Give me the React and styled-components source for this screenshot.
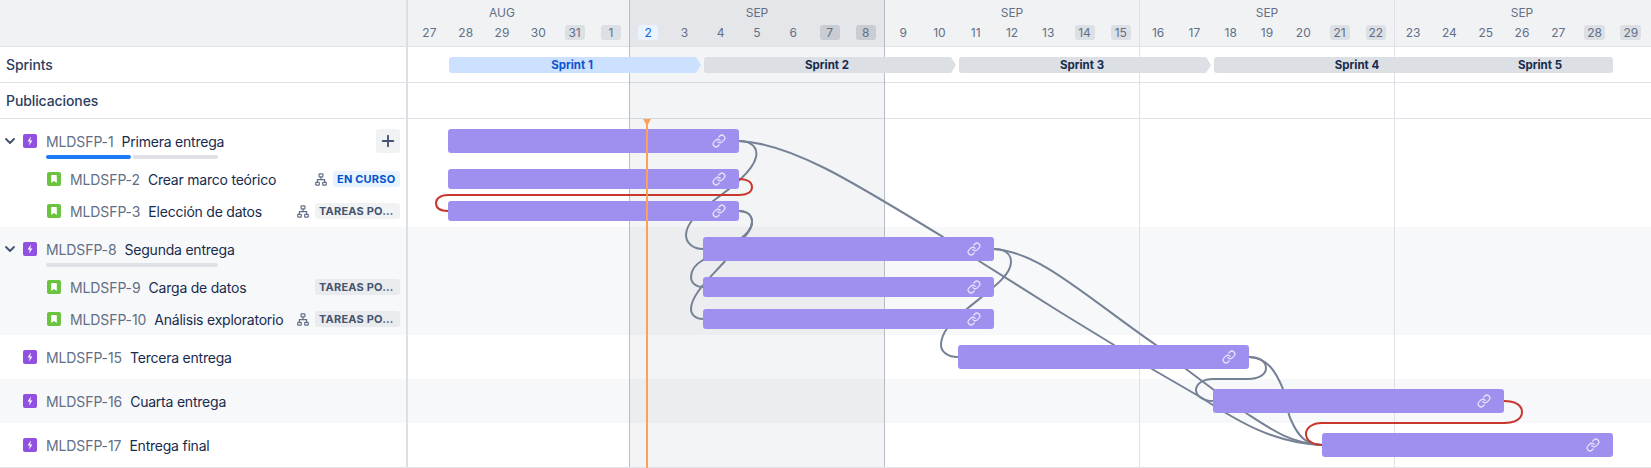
import React from "react";
import styled, { createGlobalStyle } from "styled-components";
import { Plus, ChevronDown, Link as LinkIcon } from "lucide-react";

const Global = createGlobalStyle`
  html, body { margin: 0; padding: 0; background: #fff; }
  body { font-family: Inter, "Liberation Sans", sans-serif; color: #172b4d; }
`;

const LEFT = 408;
const Page = styled.div`
  position: relative; width: 1651px; height: 468px; overflow: hidden; background: #fff;
  font-family: Inter, "Liberation Sans", sans-serif; -webkit-font-smoothing: antialiased;
`;
const Row = styled.div`
  display: grid; grid-template-columns: ${LEFT}px 1fr; height: ${p => p.$h}px;
  background: ${p => (p.$stripe ? "#f7f8f9" : "transparent")};
  border-bottom: ${p => (p.$line ? "1px solid #dfe1e6" : "none")};
`;
const HeaderRow = styled(Row)` background: #f1f2f4; `;
const Side = styled.div`
  display: flex; align-items: center; min-width: 0; box-sizing: border-box;
  border-right: 2px solid #dcdfe4; padding-left: ${p => p.$pad ?? 6}px; padding-right: 6px; position: relative;
`;
const Track = styled.div` overflow: hidden; position: relative; min-width: 0; `;
const SprintTrack = styled.div` height: 100%; `;
const PlainLabel = styled.span` font-size: 14px; font-weight: 500; color: #2c3e5d; letter-spacing: -0.1px; `;

const Weeks = styled.div` display: flex; margin-left: -34px; height: 46px; `;
const Week = styled.div`
  flex: 0 0 255px; display: flex; flex-direction: column; align-items: stretch;
  background: ${p => (p.$shaded ? "rgba(20,30,55,0.055)" : "transparent")};
`;
const Month = styled.div` height: 24px; line-height: 25px; padding-left: 1px; font-size: 12px; text-align: center; color: #626f86; `;
const Days = styled.div` display: flex; padding-left: 1px; `;
const Day = styled.div` flex: 1 1 0; display: flex; justify-content: center; `;
const DayNum = styled.span`
  display: block; height: 15px; line-height: 15px; margin-top: 1px; padding: 0 ${p => (p.$today ? 6 : p.$chip ? 3 : 0)}px; min-width: ${p => (p.$chip ? 14 : 0)}px; text-align: center;
  border-radius: 3px; font-size: 12px;
  color: ${p => (p.$today ? "#0c66e4" : "#626f86")};
  background: ${p => (p.$today ? "#e9f2ff" : p.$chip ? (p.$dark ? "#c9ccd2" : "#dcdfe4") : "transparent")};
`;

const Overlay = styled.div` position: absolute; inset: 0 0 1px 0; pointer-events: none; z-index: 1; `;
const Shade = styled.div` position: absolute; left: 629px; top: 47px; bottom: 0; width: 255px; background: rgba(20,30,55,0.05); `;
const WeekLine = styled.div` position: absolute; top: 0; bottom: 0; width: 1px; left: ${p => p.$x}px; background: ${p => (p.$dark ? "#b9bcc6" : "#dfe1e6")}; `;

const Links = styled.svg` position: absolute; left: 0; top: 0; z-index: 2; pointer-events: none; `;

const Sprint = styled.div`
  position: absolute; z-index: 3; top: ${p => p.$y}px; height: 16px; display: flex; align-items: center; justify-content: center;
  font-size: 11.5px; font-weight: 700; white-space: nowrap;
  left: ${p => p.$x}px; width: ${p => p.$w}px;
  background: ${p => (p.$active ? "#cce0ff" : "#dcdfe4")};
  color: ${p => (p.$active ? "#0c55cf" : "#172b4d")};
  border-radius: 3px 0 0 3px;
  clip-path: polygon(0 0, calc(100% - 5px) 0, 100% 50%, calc(100% - 5px) 100%, 0 100%);
  padding-right: 6px; box-sizing: border-box;
`;
const LastSprint = styled(Sprint)` clip-path: none; border-radius: 3px; padding-right: 0; `;

const Bar = styled.div`
  position: absolute; z-index: 3; box-sizing: border-box;
  left: ${p => p.$x}px; width: ${p => p.$w}px; top: ${p => p.$y}px; height: ${p => p.$h}px;
  background: #9f8fef; border-radius: 3px; display: flex; align-items: center; justify-content: flex-end; padding-right: 13px;
  color: rgba(255,255,255,0.75);
`;

const Today = styled.div` position: absolute; z-index: 4; left: 646px; top: 119px; bottom: 0; width: 2px; background: #fca05a; `;
const TodayTip = styled.div`
  position: absolute; z-index: 4; left: 643px; top: 119px; width: 0; height: 0;
  border-left: 4px solid transparent; border-right: 4px solid transparent; border-top: 7px solid #fca05a;
`;

const Expand = styled.span` position: absolute; left: 2px; top: 50%; transform: translateY(-50%); display: flex; color: #44546f; `;
const IconSlot = styled.svg` flex: 0 0 14px; width: 14px; height: 14px; display: block; `;
const Key = styled.span` margin-left: 9px; font-size: 14px; color: #626f86; white-space: nowrap; letter-spacing: -0.1px; `;
const Summary = styled.span` margin-left: 8px; font-size: 14px; color: #172b4d; white-space: nowrap; letter-spacing: -0.22px; `;
const Meta = styled.div` margin-left: auto; display: flex; align-items: center; gap: 6px; `;
const ChildSvg = styled.svg` display: block; width: 12px; height: 13px; color: #626f86; `;
const Lozenge = styled.span`
  display: block; box-sizing: border-box; height: 16px; line-height: 16px; padding: 0 4px; border-radius: 3px;
  font-size: 11px; font-weight: 700; letter-spacing: 0.2px; white-space: nowrap;
  width: ${p => (p.$active ? "67px" : "85px")};
  background: ${p => (p.$active ? "#e9f2ff" : p.$stripe ? "#e9ebee" : "#f1f2f4")};
  color: ${p => (p.$active ? "#0055cc" : "#44546f")};
`;
const AddBtn = styled.button`
  margin-left: auto; width: 24px; height: 24px; padding: 0; border: 0; border-radius: 3px; background: #f1f2f4; color: #44546f;
  display: flex; align-items: center; justify-content: center;
`;
const Progress = styled.div` position: absolute; left: 46px; bottom: 4px; width: 172px; height: 4px; display: flex; gap: 2px; `;
const ProgressPart = styled.div` flex: 1 1 0; border-radius: 2px; background: ${p => (p.$on ? "#1d7afc" : "#dfe1e6")}; `;

const EpicIcon = () => (
  <IconSlot viewBox="0 0 14 14">
    <rect width="14" height="14" rx="2" fill="#9150e0" />
    <path d="M7.9 2.6 4.6 7.6h2.2L6.1 11.4l3.3-5H7.2z" fill="#fff" />
  </IconSlot>
);
const StoryIcon = () => (
  <IconSlot viewBox="0 0 14 14">
    <rect width="14" height="14" rx="2" fill="#6cc33f" />
    <path d="M4.2 3.4c0-.3.3-.5.5-.5h4.6c.3 0 .5.2.5.5v7.5L7 8.9l-2.8 2z" fill="#fff" />
  </IconSlot>
);
const Hierarchy = () => (
  <ChildSvg viewBox="0 0 12 13" fill="none" stroke="currentColor" strokeWidth="1.2">
    <rect x="4.1" y="0.9" width="3.8" height="3" rx="0.6" />
    <path d="M6 3.9v2.8M2.4 9.4V6.7h7.2v2.7" />
    <rect x="0.7" y="9.4" width="3.6" height="2.7" rx="0.6" />
    <rect x="7.7" y="9.4" width="3.6" height="2.7" rx="0.6" />
  </ChildSvg>
);

const weeks = [
  { m: "AUG", d: [null, 27, 28, 29, 30, 31, 1] },
  { m: "SEP", d: [2, 3, 4, 5, 6, 7, 8], shaded: true },
  { m: "SEP", d: [9, 10, 11, 12, 13, 14, 15] },
  { m: "SEP", d: [16, 17, 18, 19, 20, 21, 22] },
  { m: "SEP", d: [23, 24, 25, 26, 27, 28, 29] },
];

const TODO = "TAREAS PO…";
const rows = [
  { id: "MLDSFP-1", t: "Primera entrega", h: 44, parent: true, open: true, add: true, progress: [true, false], bar: [448, 739, 10, 24] },
  { id: "MLDSFP-2", t: "Crear marco teórico", h: 32, child: true, kids: true, status: "EN CURSO", active: true, bar: [448, 739, 6, 20] },
  { id: "MLDSFP-3", t: "Elección de datos", h: 32, child: true, kids: true, status: TODO, bar: [448, 739, 6, 20] },
  { id: "MLDSFP-8", t: "Segunda entrega", h: 44, parent: true, open: true, stripe: true, progress: [false], bar: [703, 994, 10, 24] },
  { id: "MLDSFP-9", t: "Carga de datos", h: 32, child: true, stripe: true, status: TODO, bar: [703, 994, 6, 20] },
  { id: "MLDSFP-10", t: "Análisis exploratorio", h: 32, child: true, kids: true, stripe: true, status: TODO, bar: [703, 994, 6, 20] },
  { id: "MLDSFP-15", t: "Tercera entrega", h: 44, parent: true, bar: [958, 1249, 10, 24] },
  { id: "MLDSFP-16", t: "Cuarta entrega", h: 44, parent: true, stripe: true, bar: [1213, 1504, 10, 24] },
  { id: "MLDSFP-17", t: "Entrega final", h: 44, parent: true, bar: [1322, 1613, 10, 24], line: true },
];

const grey = [
  "M739 141 C 752 141 758 148 756 157 C 753 172 728 190 713 201 C 698 212 686 224 686 235 C 686 243 693 249 703 249",
  "M739 141 C 790 143 850 180 943 237 L 979 261 L 1060 312 L 1114 345 L 1152 369 L 1202 398 C 1240 423 1275 443 1322 445",
  "M994 249 C 1040 252 1085 296 1156 345 L 1186 369 L 1214 390 L 1246 413 C 1272 430 1290 443 1322 445",
  "M994 249 C 1005 249 1011 254 1011 262 C 1011 276 990 290 968 308 C 952 320 941 333 941 345 C 941 352 948 357 958 357",
  "M739 211 C 748 211 752 216 752 222 C 752 234 735 244 725 261 C 712 276 691 294 691 309 C 691 315 696 319 703 319",
  "M739 211 C 748 211 752 216 752 222 C 752 232 740 238 732 246 C 722 253 712 256 703 260 C 696 264 691 270 691 277 C 691 283 696 287 703 287",
  "M1249 357 C 1259 357 1266 361 1266 368 C 1266 375 1258 379 1248 379 L 1213 379 C 1203 379 1196 384 1196 390 C 1196 396 1203 401 1213 401",
  "M1249 357 C 1268 358 1276 372 1283 389 C 1288 402 1287 413 1291 420 C 1298 436 1306 445 1322 445",
];
const red = [
  "M739 179 C 747 179 752 182 752 187 C 752 192 747 195 739 195 L 448 195 C 440 195 436 199 436 203 C 436 208 440 211 448 211",
  "M1504 401 C 1515 401 1522 405 1522 412 C 1522 419 1515 423 1504 423 L 1322 423 C 1312 423 1306 428 1306 434 C 1306 440 1312 445 1322 445",
];

const LeftCell = ({ r }) => (
  <Side $pad={r.child ? 47 : 23}>
    {r.open && <Expand><ChevronDown size={16} strokeWidth={2.8} /></Expand>}
    {r.child ? <StoryIcon /> : <EpicIcon />}
    <Key>{r.id}</Key>
    <Summary>{r.t}</Summary>
    {r.add && <AddBtn aria-label="add"><Plus size={18} strokeWidth={2.5} /></AddBtn>}
    {r.status && (
      <Meta>
        {r.kids && <Hierarchy />}
        <Lozenge $active={r.active} $stripe={r.stripe}>{r.status}</Lozenge>
      </Meta>
    )}
    {r.progress && (
      <Progress>
        {r.progress.map((on, i) => <ProgressPart key={i} $on={on} />)}
      </Progress>
    )}
  </Side>
);

export default function App() {
  let top = 119;
  return (
    <Page>
      <Global />
      <HeaderRow $h={46} $line>
        <Side />
        <Track>
          <Weeks>
            {weeks.map((w, i) => (
              <Week key={i} $shaded={w.shaded}>
                <Month>{w.m}</Month>
                <Days>
                  {w.d.map((d, j) => (
                    <Day key={j}>
                      {d !== null && (
                        <DayNum $chip={j >= 5} $dark={w.shaded} $today={d === 2 && w.shaded}>{d}</DayNum>
                      )}
                    </Day>
                  ))}
                </Days>
              </Week>
            ))}
          </Weeks>
        </Track>
      </HeaderRow>
      <Row $h={35} $line>
        <Side><PlainLabel>Sprints</PlainLabel></Side>
        <SprintTrack>
          <Sprint $y={57} $x={449} $w={252} $active>Sprint 1</Sprint>
          <Sprint $y={57} $x={704} $w={252}>Sprint 2</Sprint>
          <Sprint $y={57} $x={959} $w={252}>Sprint 3</Sprint>
          <Sprint $y={57} $x={1214} $w={292}>Sprint 4</Sprint>
          <LastSprint $y={57} $x={1467} $w={146}>Sprint 5</LastSprint>
        </SprintTrack>
      </Row>
      <Row $h={35} $line>
        <Side><PlainLabel>Publicaciones</PlainLabel></Side>
        <Track />
      </Row>

      {rows.map(r => {
        const y = top;
        top += r.h;
        return (
          <Row key={r.id} $h={r.h} $stripe={r.stripe} $line={r.line}>
            <LeftCell r={r} />
            <div />
            <Bar $x={r.bar[0]} $w={r.bar[1] - r.bar[0]} $y={y + r.bar[2]} $h={r.bar[3]}>
              <LinkIcon size={14} strokeWidth={2.2} />
            </Bar>
          </Row>
        );
      })}

      <Overlay>
        <Shade />
        <WeekLine $x={629} $dark />
        <WeekLine $x={884} $dark />
        <WeekLine $x={1139} />
        <WeekLine $x={1394} />
      </Overlay>

      <Links width="1651" height="468" viewBox="0 0 1651 468" fill="none">
        {grey.map((d, i) => <path key={i} d={d} stroke="#758195" strokeWidth="2" />)}
        {red.map((d, i) => <path key={i} d={d} stroke="#c9372c" strokeWidth="2" />)}
      </Links>

      <Today />
      <TodayTip />
    </Page>
  );
}
